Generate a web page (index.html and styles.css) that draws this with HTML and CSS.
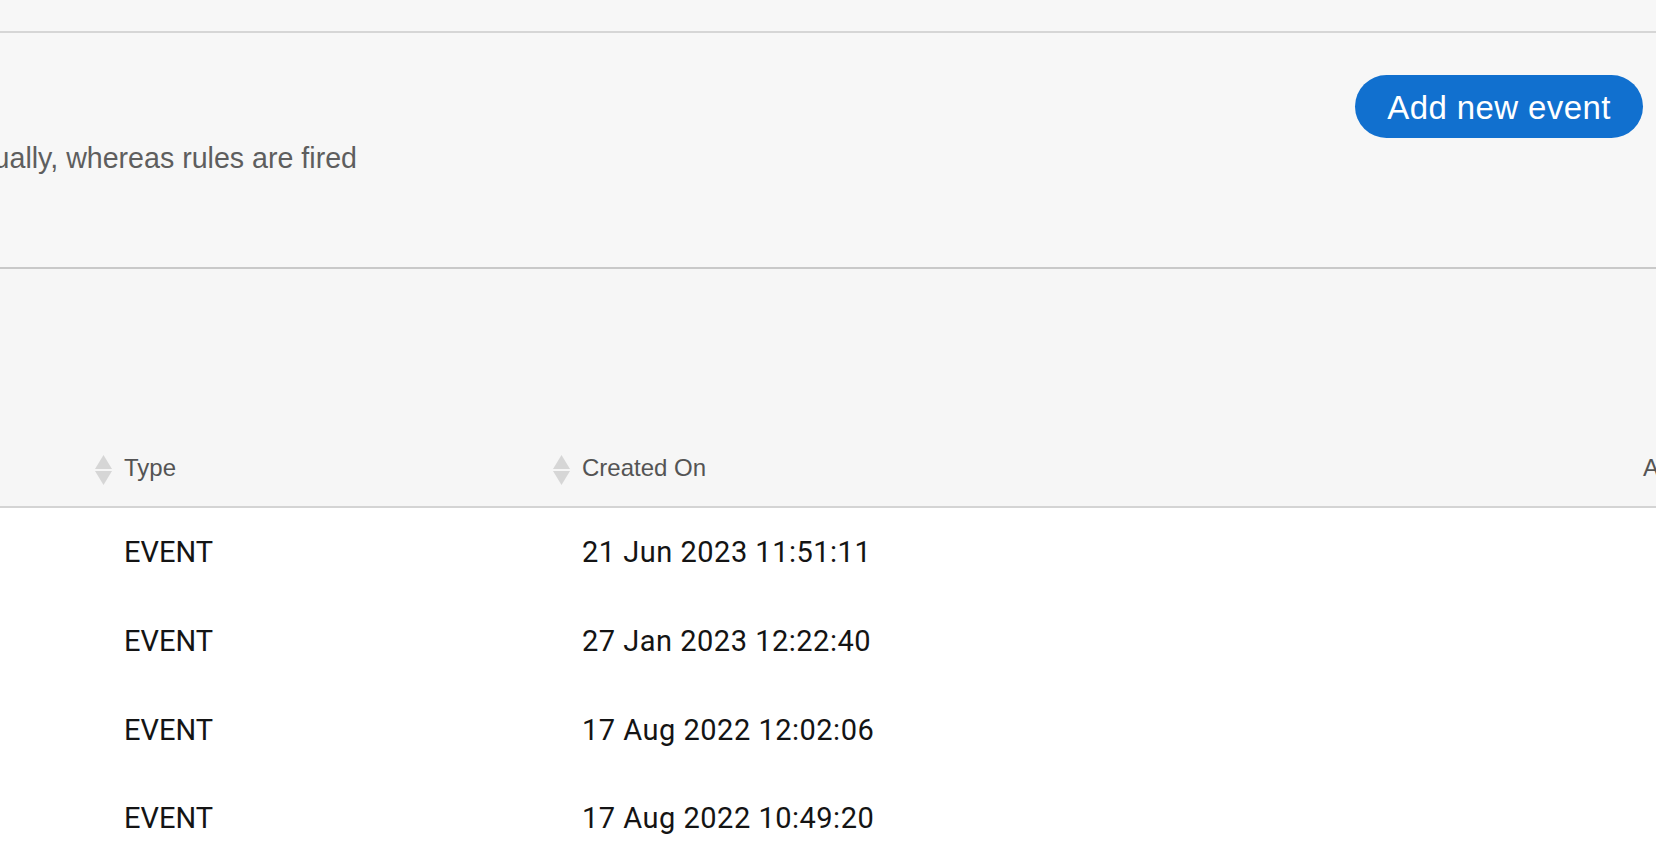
FILE: index.html
```html
<!DOCTYPE html>
<html lang="en">
<head>
<meta charset="utf-8">
<title>Events</title>
<link rel="stylesheet" href="styles.css">
</head>
<body>
<div class="topbar"></div>
<header class="page-head">
  <div class="desc"><p class="desc-text">Events can be triggered manually, whereas rules are fired</p></div>
  <button class="btn-primary" type="button">Add new event</button>
</header>
<section class="table-area">
  <div class="toolbar"></div>
  <div class="thead">
    <div class="th th-empty"></div>
    <div class="th">
      <svg class="sort" width="17" height="30" viewBox="0 0 17 30"><path d="M8.5 0L17 14H0Z"/><path d="M0 16H17L8.5 30Z"/></svg>
      <span>Type</span>
    </div>
    <div class="th">
      <svg class="sort" width="17" height="30" viewBox="0 0 17 30"><path d="M8.5 0L17 14H0Z"/><path d="M0 16H17L8.5 30Z"/></svg>
      <span>Created On</span>
    </div>
    <div class="th th-plain"><span>Actions</span></div>
  </div>
  <div class="tbody">
    <div class="tr"><div class="td"></div><div class="td">EVENT</div><div class="td td-date">21 Jun 2023 11:51:11</div><div class="td"></div></div>
    <div class="tr"><div class="td"></div><div class="td">EVENT</div><div class="td td-date">27 Jan 2023 12:22:40</div><div class="td"></div></div>
    <div class="tr"><div class="td"></div><div class="td">EVENT</div><div class="td td-date">17 Aug 2022 12:02:06</div><div class="td"></div></div>
    <div class="tr"><div class="td"></div><div class="td">EVENT</div><div class="td td-date">17 Aug 2022 10:49:20</div><div class="td"></div></div>
  </div>
</section>
</body>
</html>
```
FILE: styles.css
```css
* { box-sizing: border-box; }
html, body { margin: 0; padding: 0; }
body {
  width: 1656px;
  height: 852px;
  overflow: hidden;
  background: #ffffff;
  font-family: "Liberation Sans", Arial, sans-serif;
}
.topbar {
  height: 33px;
  background: #f7f7f7;
  border-bottom: 2px solid #d6d6d6;
}
.page-head {
  height: 236px;
  background: #f7f7f7;
  border-bottom: 2px solid #c9c9c9;
  display: flex;
  justify-content: space-between;
  align-items: flex-start;
  padding: 42px 13px 0 0;
}
.desc {
  width: 357px;
  margin-top: 67px;
  display: flex;
  justify-content: flex-end;
}
.desc-text {
  margin: 0;
  flex: none;
  white-space: nowrap;
  font-size: 28.6px;
  line-height: 32px;
  color: #5e5e5e;
}
.btn-primary {
  width: 288px;
  height: 63px;
  border: none;
  border-radius: 32px;
  background: #1170cf;
  color: #ffffff;
  font-family: "Liberation Sans", Arial, sans-serif;
  font-size: 33px;
  letter-spacing: 0.4px;
  padding: 3px 0 0;
  cursor: pointer;
}
.table-area {
  background: #f6f6f6;
}
.toolbar {
  height: 160px;
}
.thead, .tr {
  display: grid;
  grid-template-columns: 95px 458px 1090px 200px;
  width: max-content;
}
.thead {
  height: 79px;
  border-bottom: 2px solid #d4d4d4;
}
.th {
  display: flex;
  align-items: center;
  gap: 12px;
  font-size: 24px;
  color: #545454;
  white-space: nowrap;
}
.sort {
  flex: none;
  fill: #d6d6d6;
  margin-top: 4px;
}
.tbody {
  background: #ffffff;
}
.tr {
  height: 88.7px;
}
.td {
  display: flex;
  align-items: center;
  padding-left: 29px;
  font-family: Roboto, "Liberation Sans", Arial, sans-serif;
  font-size: 29px;
  color: #141414;
  white-space: nowrap;
}
.td-date {
  letter-spacing: 0.5px;
}
```
